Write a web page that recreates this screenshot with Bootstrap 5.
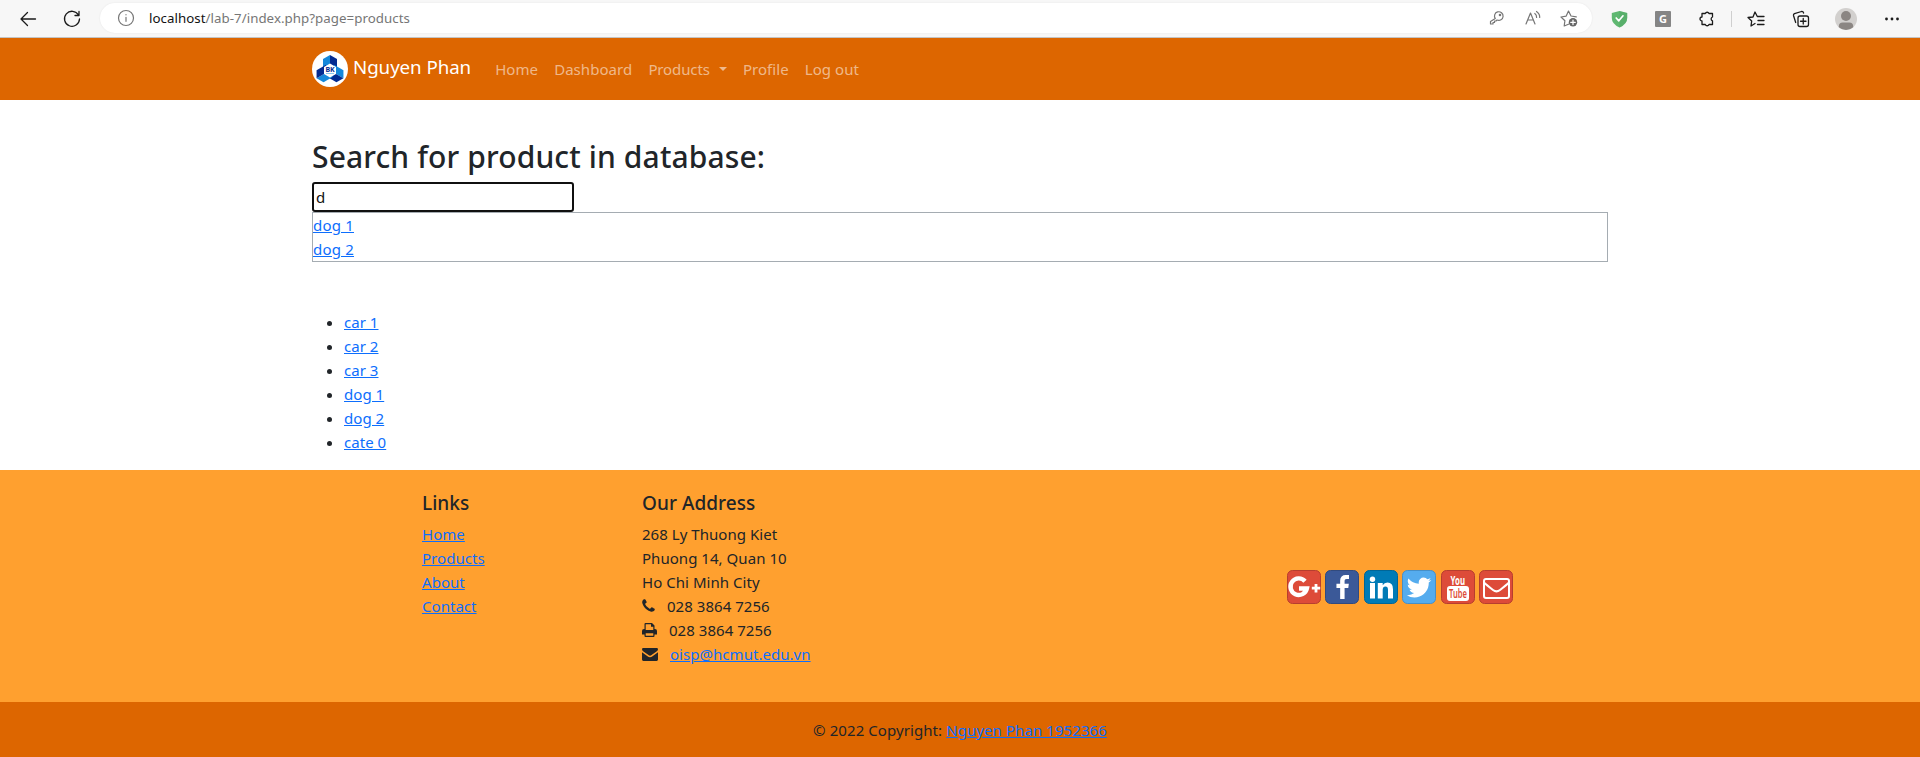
<!DOCTYPE html>
<html lang="en">
<head>
<meta charset="utf-8">
<meta name="viewport" content="width=device-width, initial-scale=1">
<title>Products</title>
<link href="https://cdn.jsdelivr.net/npm/bootstrap@5.3.0/dist/css/bootstrap.min.css" rel="stylesheet">
<style>
  body { font-family: "Noto Sans", "Open Sans", sans-serif; font-size: 15px; line-height: 24px; letter-spacing: .04px; color: #212529; overflow: hidden; }
  a { color: #0d6efd; }
  .browser-bar { height: 38px; background: #f7f7f7; border-bottom: 1px solid #c4c4c4; }
  .browser-bar svg { display: block; flex: none; fill: none; stroke: #1b1b1b; stroke-width: 1.3; stroke-linecap: round; stroke-linejoin: round; }
  .tool { width: 24px; display: flex; justify-content: center; flex: none; }
  .address-pill { height: 30px; margin: 3px 0 4px 16px; width: 1492px; border-radius: 15px; background: #fff; box-shadow: 0 0 2px rgba(0,0,0,.08); padding: 0 11px 0 14px; }
  .address-pill svg { stroke: #767676; stroke-width: 1.2; }
  .url { font-size: 13.3px; letter-spacing: .04px; color: #767676; margin-left: 11px; }
  .url b { font-weight: 400; color: #111; }
  .bar-divider { width: 1px; height: 16px; background: #cfcfcf; }
  .top-nav, .copyright { background: #dd6600; }
  .top-nav { height: 62px; --bs-navbar-padding-y: 8px; --bs-navbar-color: rgba(255,255,255,.55); }
  .top-nav .navbar-brand { font-size: 18.75px; line-height: 30px; letter-spacing: -.08px; padding: 0; margin-right: 16px; }
  .top-nav .brand-name { margin: -4px 0 0 1px; }
  .top-nav .nav-link { line-height: 24px; padding-top: 8px; padding-bottom: 8px; }
  .top-nav .nav-link + .nav-link { margin-left: .2px; }
  .top-nav .dropdown-toggle { letter-spacing: -.12px; }
  .top-nav .dropdown-toggle::after { margin-left: 9px; border-width: 4.8px; border-bottom: 0; vertical-align: 4px; }
  .search-area { padding-top: 38px; }
  .search-area h2 { font-size: 30px; line-height: 38px; letter-spacing: .13px; margin-bottom: 6px; }
  .search-box { display: block; width: 262px; height: 30px; border: 2px solid #101010; border-radius: 3px; padding: 0 2px; color: #111; outline: 0; line-height: 24px; }
  .results { border: 1px solid #a5acb2; height: 50px; margin-bottom: 48px; }
  .results a { letter-spacing: .2px; }
  .site-footer { background: #ffa02f; height: 232px; padding-top: 21px; }
  .site-footer h5 { font-size: 19px; line-height: 24px; margin-bottom: 7px; }
  .site-footer svg { vertical-align: middle; }
  .contact-line svg { fill: #212529; margin-top: -3px; }
  .social { gap: 4.4px; }
  .social > svg { width: 34px; height: 34px; flex: none; }
  .copyright { height: 55px; letter-spacing: .08px; }
</style>
</head>
<body>

<div class="browser-bar d-flex align-items-center">
  <div class="tool" style="margin-left:16px"><svg width="20" height="20" viewBox="0 0 20 20"><path d="M17.500 10H3M9.500 3.500 3 10l6.500 6.500"/></svg></div>
  <div class="tool" style="margin-left:20px"><svg width="20" height="20" viewBox="0 0 20 20"><path d="M16.500 6A7.500 7.500 0 1 0 17.500 10M17 2.500V6.500H13"/></svg></div>
  <div class="address-pill d-flex align-items-center">
    <div class="tool"><svg width="18" height="18" viewBox="0 0 18 18"><circle cx="9" cy="9" r="7.500"/><path d="M9 8.300v4M9 5.600v.2"/></svg></div>
    <div class="url me-auto"><b>localhost</b>/lab-7/index.php?page=products</div>
    <div class="tool"><svg width="16" height="16" viewBox="0 0 16 16"><path d="M6.300 8.600A4.300 4.300 0 1 1 8 10L7 11H5.500v1.500H4V14H1.500v-2.500z"/><circle cx="11" cy="5" r=".7"/></svg></div>
    <div class="tool" style="margin-left:12px"><svg width="18" height="18" viewBox="0 0 18 18"><path d="M2 15 6.500 4 11 15M3.700 11h5.600M10.800 4.500q2 1.500 1.800 4M12.500 2.500q3.500 2.500 3.200 6"/></svg></div>
    <div class="tool" style="margin-left:12px"><svg width="18" height="18" viewBox="0 0 18 18"><path d="M9 15 4.200 17l.7-5.300L1 8l5.200-.9L8.500 2 11 7l5.300.8"/><circle cx="13" cy="13.300" r="4.200" fill="#666" stroke="none"/><path stroke="#fff" d="M13 11v4.600M10.700 13.300h4.600"/></svg></div>
  </div>
  <div class="tool" style="margin-left:15px"><svg width="17" height="18" viewBox="0 0 17 18"><path fill="#5fb871" stroke="none" d="M8.500 1 16.200 3v5q0 6-7.700 9.500Q.8 14 .8 8V3z"/><path fill="#4fa563" stroke="none" d="M8.500 1 16.200 3v5q0 6-7.700 9.500z" opacity=".45"/><path stroke="#fff" stroke-width="1.700" d="m5.200 8 2.600 2.800L12 5.800"/></svg></div>
  <div class="tool" style="margin-left:20px"><svg width="16" height="16" viewBox="0 0 16 16"><rect width="16" height="16" rx="1" fill="#858585" stroke="none"/><text x="8" y="12" text-anchor="middle" font-size="11" font-weight="700" fill="#fff" stroke="none">G</text></svg></div>
  <div class="tool" style="margin-left:20px"><svg width="18" height="18" viewBox="0 0 18 18"><path d="M5 3.500H7.300a2 2 0 0 1 3.700 0h3.500V7a2 2 0 0 0 0 3.800v3.700H11a2 2 0 0 1-3.700 0H4V11a2 2 0 0 1 0-4V3.500z"/></svg></div>
  <div class="bar-divider" style="margin-left:12px"></div>
  <div class="tool" style="margin-left:12px"><svg width="18" height="18" viewBox="0 0 18 18"><path d="M8 13.500 4 16l.7-5L1 7.500 6 7l2-5 2.300 4.500H17M11 10.500h6M10.500 14.500H17"/></svg></div>
  <div class="tool" style="margin-left:21px"><svg width="18" height="18" viewBox="0 0 18 18"><rect x="6" y="6" width="10.500" height="10.500" rx="2"/><path d="M11.250 8.500v5.500M8.500 11.250H14M3.700 12.500 1.500 5.500q-.3-1.300 1-1.900L9.500 1.500q1.600-.3 2.100 1.500"/></svg></div>
  <div class="tool" style="margin-left:21px"><svg width="22" height="22" viewBox="0 0 22 22" style="stroke:none"><circle cx="11" cy="11" r="11" fill="#d2d0ce"/><circle cx="11" cy="8" r="5" fill="#8b8683"/><path fill="#8b8683" d="M3.800 19.300q-.3-4.800 4-4.800h6.400q4.300 0 4 4.800A11 11 0 0 1 3.800 19.300"/></svg></div>
  <div class="tool" style="margin-left:22px"><svg width="16" height="4" viewBox="0 0 16 4" style="stroke:none;fill:#1b1b1b"><circle cx="2.500" cy="2" r="1.400"/><circle cx="8" cy="2" r="1.400"/><circle cx="13.500" cy="2" r="1.400"/></svg></div>
</div>

<nav class="navbar navbar-expand-lg navbar-dark top-nav">
  <div class="container">
    <a class="navbar-brand d-flex align-items-center" href="#">
      <svg width="36" height="36" viewBox="0 0 36 36" class="me-1 flex-shrink-0">
        <defs><g id="arm"><path fill="#1488db" d="M18 4 11 8v11l7-4z"/><path fill="#032b91" d="m18 4 7 4v11l-7-4z"/></g></defs>
        <circle cx="18" cy="18" r="18" fill="#fff"/>
        <use href="#arm"/>
        <use href="#arm" transform="rotate(120 18 19.500)"/>
        <use href="#arm" transform="rotate(240 18 19.500)"/>
        <path fill="#fff" d="m18 12.500 6 3.500v7l-6 3.500-6-3.500v-7z"/>
        <text x="18" y="20.800" text-anchor="middle" font-size="7" font-weight="700" fill="#032b91">BK</text>
        <path stroke="#8cc8ee" d="M14 22.500h8"/>
      </svg>
      <span class="brand-name">Nguyen Phan</span>
    </a>
    <div class="navbar-nav me-auto">
      <a class="nav-link" href="#">Home</a>
      <a class="nav-link" href="#">Dashboard</a>
      <a class="nav-link dropdown-toggle" href="#">Products</a>
      <a class="nav-link" href="#">Profile</a>
      <a class="nav-link" href="#">Log out</a>
    </div>
  </div>
</nav>

<main class="container search-area">
  <h2>Search for product in database:</h2>
  <input class="search-box" type="text" value="d">
  <div class="results"><a href="#">dog 1</a><br><a href="#">dog 2</a></div>
  <ul class="mb-3">
    <li><a href="#">car 1</a></li>
    <li><a href="#">car 2</a></li>
    <li><a href="#">car 3</a></li>
    <li><a href="#">dog 1</a></li>
    <li><a href="#">dog 2</a></li>
    <li><a href="#">cate 0</a></li>
  </ul>
</main>

<footer>
  <div class="site-footer">
    <div class="container">
      <div class="row gx-4" style="margin:0 -12px">
        <div class="col-2 offset-1">
          <h5>Links</h5>
          <ul class="list-unstyled mb-0">
            <li><a href="#">Home</a></li>
            <li><a href="#">Products</a></li>
            <li><a href="#">About</a></li>
            <li><a href="#">Contact</a></li>
          </ul>
        </div>
        <div class="col-5">
          <h5>Our Address</h5>
          <address>
            <div>268 Ly Thuong Kiet</div>
            <div>Phuong 14, Quan 10</div>
            <div>Ho Chi Minh City</div>
            <div class="contact-line"><svg width="13" height="16" viewBox="192 0 1408 1792"><path d="M1600 1240q0 27-10 70.500t-21 68.500q-21 50-122 106-94 51-186 51-27 0-53-3.500t-57.500-12.500-47-14.500-55.500-20.500-49-18q-98-35-175-83-127-79-264-216t-216-264q-48-77-83-175-3-9-18-49t-20.500-55.500-14.500-47-12.500-57.500-3.500-53q0-92 51-186 56-101 106-122 25-11 68.500-21t70.500-10q14 0 21 3 18 6 53 76 11 19 30 54t35 63.500 31 53.500q3 4 17.500 25t21.500 35.500 7 28.500q0 20-28.500 50t-62 55-62 53-28.500 46q0 9 5 22.500t8.500 20.500 14 24 11.500 19q76 137 174 235t235 174q2 1 19 11.500t24 14 20.500 8.500 22.500 5q18 0 46-28.500t53-62 55-62 50-28.500q14 0 28.500 7t35.500 21.500 25 17.500q25 15 53.500 31t63.500 35 54 30q70 35 76 53 3 7 3 21z"/></svg><span style="margin-left:12px">028 3864 7256</span></div>
            <div class="contact-line"><svg width="15" height="14" viewBox="0 0 15 14"><path fill-rule="evenodd" d="M2.500 6V1q0-1 1-1H10l2.500 2.500V6H13q2 0 2 2v3.500h-2.500V13q0 1-1 1h-8q-1 0-1-1v-1.500H0V8q0-2 2-2zM3.700 1.200V7h7.600V3.700H9V1.200zM3.700 10.200v2.600h7.600v-2.600z"/></svg><span style="margin-left:12px">028 3864 7256</span></div>
            <div class="contact-line"><svg width="16" height="13" viewBox="0 0 16 13"><path d="M1.300 0h13.400Q16 0 16 1.200q0 1.300-1.500 2.400L9.500 7.100Q8 8.200 6.500 7.100L1.500 3.600Q0 2.500 0 1.300 0 0 1.300 0M0 4.300l5.500 3.900Q8 10.200 10.500 8.200L16 4.300v7.300q0 1.400-1.400 1.400H1.400Q0 13 0 11.600z"/></svg><a href="#" style="margin-left:12px">oisp@hcmut.edu.vn</a></div>
          </address>
        </div>
        <div class="col-4 align-self-center">
          <div class="social d-flex justify-content-center">
            <svg viewBox="0 0 34 34"><rect x=".5" y=".5" width="33" height="33" rx="5" fill="#dd4b39" stroke="#b63e2f"/><path fill="none" stroke="#fff" stroke-width="4.400" d="M18 11.200A8.300 8.300 0 1 0 19.900 18.500H12"/><path fill="none" stroke="#fff" stroke-width="2.800" d="M29 14v8.500M24.800 18.200h8.400"/></svg>
            <svg viewBox="0 0 34 34"><rect x=".5" y=".5" width="33" height="33" rx="5" fill="#3b5998" stroke="#314a7e"/><svg x="4.500" y="4.500" width="26" height="25" viewBox="0 0 1792 1664"><path fill="#fff" d="M1343 12v264h-157q-86 0-116 36t-30 108v189h293l-39 296h-254v759h-306v-759h-255v-296h255v-218q0-186 104-288.500t277-102.500q147 0 228 12z"/></svg></svg>
            <svg viewBox="0 0 34 34"><rect x=".5" y=".5" width="33" height="33" rx="5" fill="#007bb6" stroke="#006697"/><path fill="#fff" d="M6 13h5v15.500H6zM13.800 13h4.900v2.200q1.600-2.600 4.800-2.600 5.500 0 5.500 6.600v9.300h-5V20q0-3.400-2.500-3.400-2.800 0-2.800 3.400v8.500h-4.900z"/><circle cx="8.500" cy="9.200" r="2.700" fill="#fff"/></svg>
            <svg viewBox="0 0 34 34"><rect x=".5" y=".5" width="33" height="33" rx="5" fill="#55acee" stroke="#478fc6"/><svg x="4" y="4.500" width="26" height="26" viewBox="60 60 1672 1672"><path fill="#fff" d="M1684 408q-67 98-162 167 1 14 1 42 0 130-38 259.500t-115.500 248.500-184.500 210.500-258 146-323 54.500q-271 0-496-145 35 4 78 4 225 0 401-138-105-2-188-64.500t-114-159.500q33 5 61 5 43 0 85-11-112-23-185.500-111.500t-73.500-205.500v-4q68 38 146 41-66-44-105-115t-39-154q0-88 44-163 121 149 294.500 238.500t371.500 99.500q-8-38-8-74 0-134 94.500-228.500t228.500-94.500q140 0 236 102 109-21 205-78-37 115-142 178 93-10 186-50z"/></svg></svg>
            <svg viewBox="0 0 34 34"><rect x=".5" y=".5" width="33" height="33" rx="5" fill="#dd4b39" stroke="#b63e2f"/><text x="9.500" y="14.500" textLength="14.500" lengthAdjust="spacingAndGlyphs" font-size="12.500" font-weight="700" fill="#fff">You</text><rect x="6" y="16" width="22" height="15" rx="3" fill="#fff"/><text x="8" y="28" textLength="18" lengthAdjust="spacingAndGlyphs" font-size="12.500" font-weight="600" fill="#dd4b39">Tube</text></svg>
            <svg viewBox="0 0 34 34"><rect x=".5" y=".5" width="33" height="33" rx="5" fill="#dd4b39" stroke="#b63e2f"/><rect x="5" y="9" width="25" height="19" rx="2" fill="none" stroke="#fff" stroke-width="2"/><path fill="none" stroke="#fff" stroke-width="2" d="M5 12.500q2 2 9 7.500 3.500 2.800 7 0 7-5.500 9-7.500"/></svg>
          </div>
        </div>
      </div>
    </div>
  </div>
  <div class="copyright text-center pt-3">© 2022 Copyright: <a href="#">Nguyen Phan 1952366</a></div>
</footer>

<script src="https://cdn.jsdelivr.net/npm/bootstrap@5.3.0/dist/js/bootstrap.bundle.min.js"></script>
</body>
</html>
